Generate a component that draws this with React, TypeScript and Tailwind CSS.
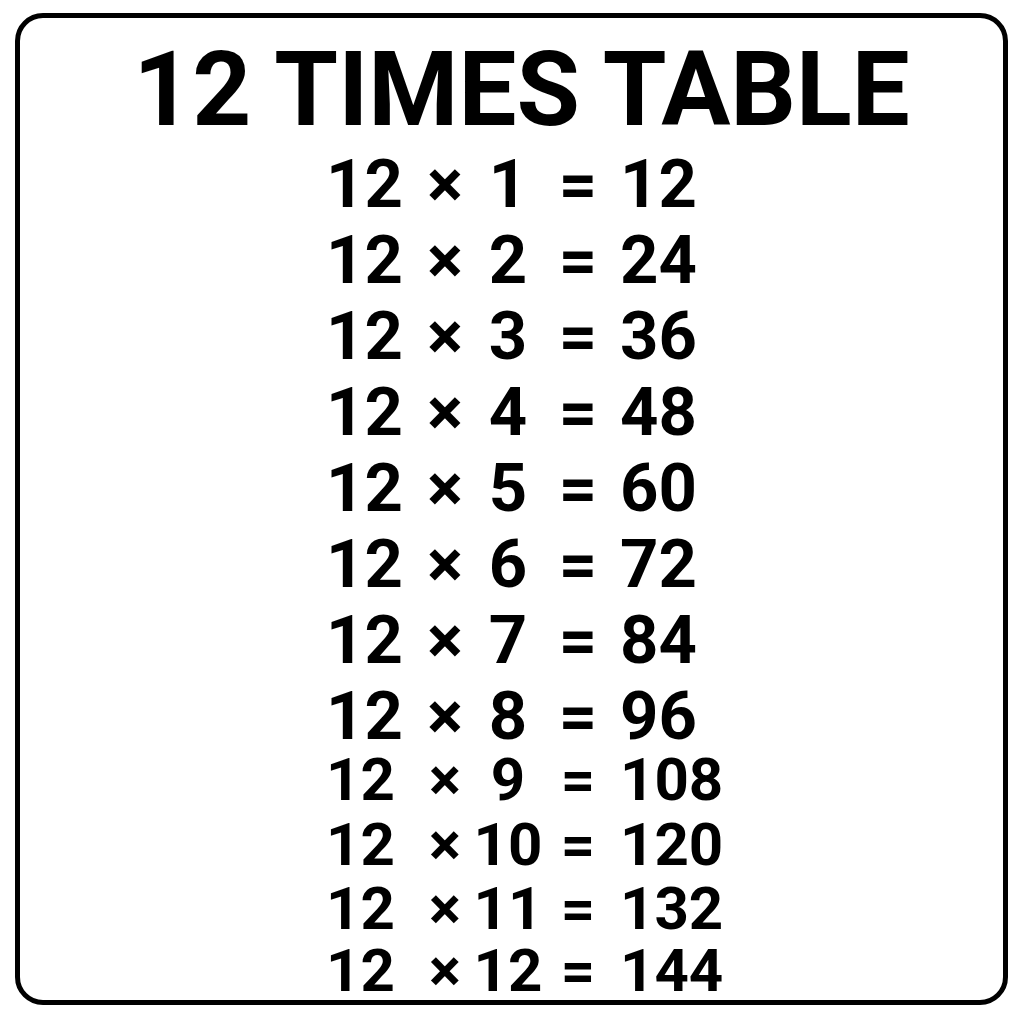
const rows = [
  { a: '1', r: '12', cls: 'h-[76px] text-[67px]' },
  { a: '2', r: '24', cls: 'h-[76px] text-[67px]' },
  { a: '3', r: '36', cls: 'h-[76px] text-[67px]' },
  { a: '4', r: '48', cls: 'h-[76px] text-[67px]' },
  { a: '5', r: '60', cls: 'h-[76px] text-[67px]' },
  { a: '6', r: '72', cls: 'h-[76px] text-[67px]' },
  { a: '7', r: '84', cls: 'h-[76px] text-[67px]' },
  { a: '8', r: '96', cls: 'h-[67px] text-[67px]' },
  { a: '9', r: '108', cls: 'h-[65px] text-[60px]' },
  { a: '10', r: '120', cls: 'h-[64px] text-[60px]' },
  { a: '11', r: '132', cls: 'h-[62px] text-[60px]' },
  { a: '12', r: '144', cls: 'h-[60px] text-[60px]' },
]

export default function App() {
  return (
    <div className="w-[1024px] h-[1024px] bg-white pt-[13px] pl-[15px]" style={{ fontFamily: 'Roboto, "Noto Sans", sans-serif' }}>
      <div className="w-[993px] h-[992px] border-[5px] border-black rounded-[28px] text-black">
        {/* Title */}
        <h1 className="pt-[20px] pl-[20px] text-center text-[103px] leading-[103px] font-bold">
          12 TIMES TABLE
        </h1>

        {/* Table rows */}
        <div className="mt-[10px] flex flex-col">
          {rows.map((row) => (
            <div key={row.a} className={`flex items-start pl-[306px] leading-none font-bold ${row.cls}`}>
              <span className="w-[94px]">12</span>
              <span className="w-[50px] text-center">×</span>
              <span className="w-[76px] text-center">{row.a}</span>
              <span className="w-[64px] text-center">=</span>
              <span className="pl-[10px]">{row.r}</span>
            </div>
          ))}
        </div>
      </div>
    </div>
  )
}
